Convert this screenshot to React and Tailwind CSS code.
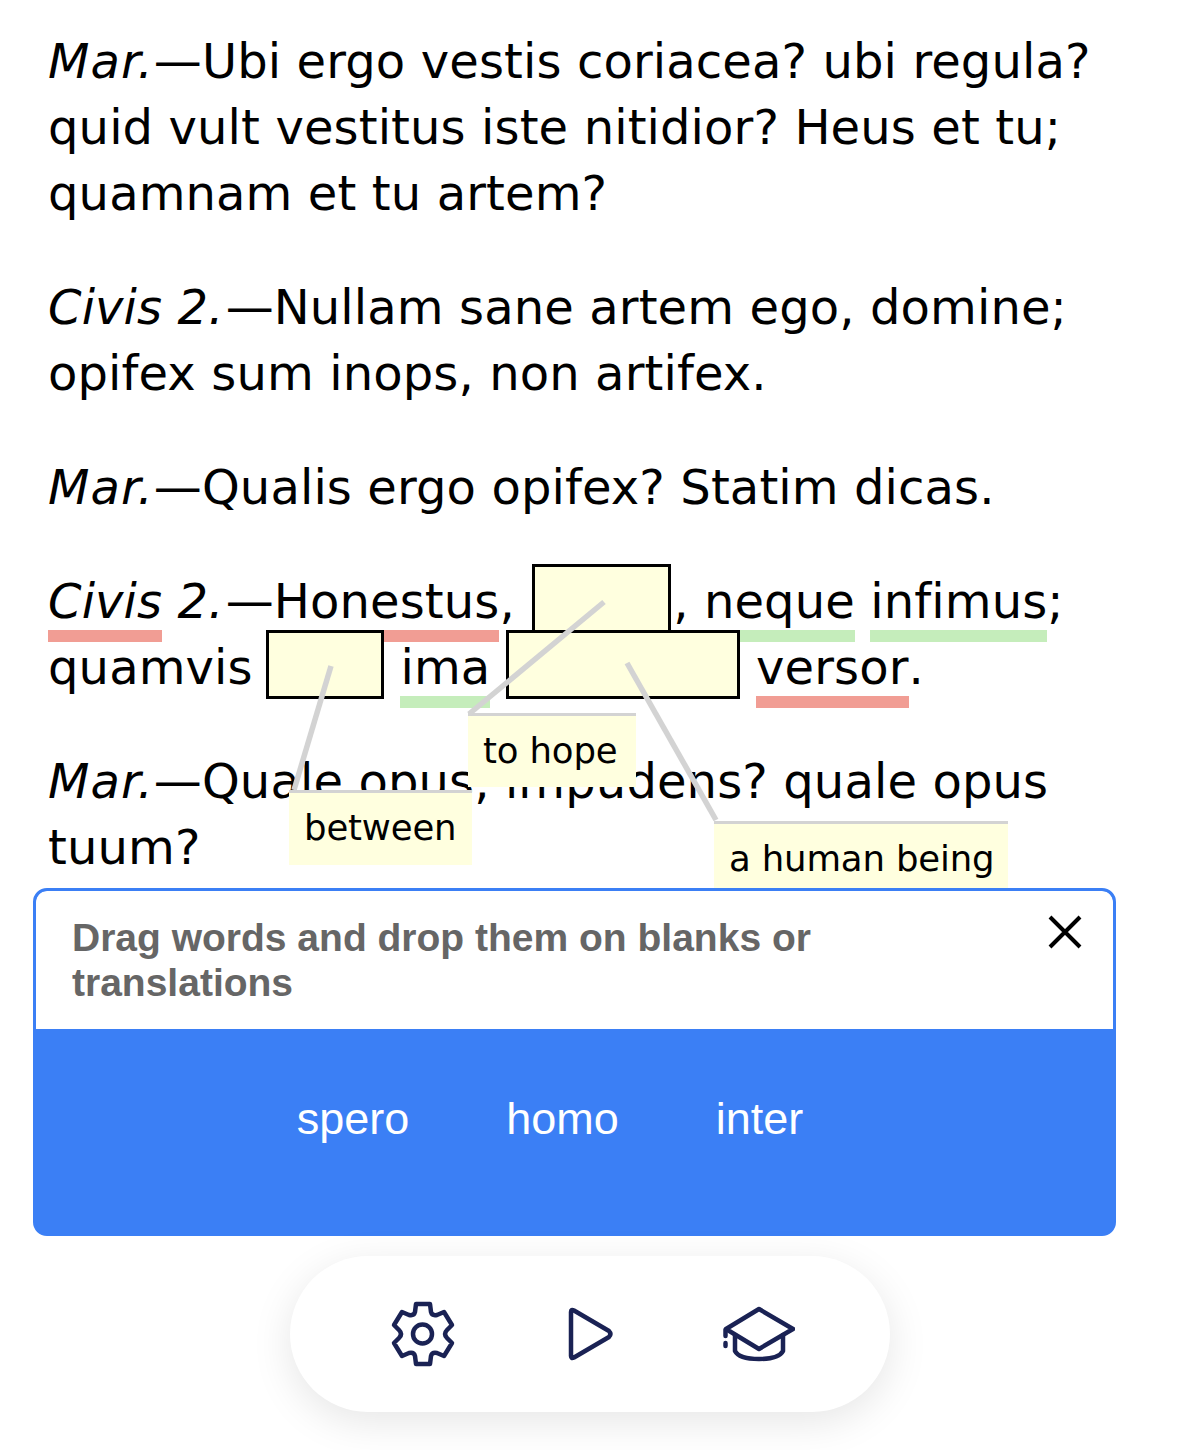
const Marked = ({ color, children }) => (
  <span className="relative inline-block">
    {children}
    <span className={`absolute left-0 right-0 top-[62px] h-[12px] ${color === 'red' ? 'bg-[#f19d94]' : 'bg-[#c5edbb]'}`} />
  </span>
);

const Blank = ({ width, className }) => (
  <span
    className={`relative inline-block align-top h-[69px] -mt-[4px] -mb-[1px] border-[3px] border-black bg-[#ffffdf] ${className}`}
    style={{ width }}
  />
);

const Hint = ({ className, children }) => (
  <div className={`absolute pl-[15px] pt-[12px] border-t-[3px] border-[#d3d3d3] bg-[#ffffdf] text-[35.5px] tracking-[-0.15px] leading-[46px] text-black ${className}`}>
    {children}
  </div>
);

const GearIcon = () => (
  <svg width="64" height="66" viewBox="0 0 64 66" fill="none" stroke="#1a2254" strokeWidth="4.5" strokeLinejoin="round" strokeLinecap="round">
    <path d="M25 3H39L40 11Q41 15 46 14L53 11L61 24L56 29Q52 33 56 37L61 42L53 55L46 52Q41 51 40 55L39 63H25L24 55Q23 51 18 52L11 55L3 42L8 37Q12 33 8 29L3 24L11 11L18 14Q23 15 24 11Z" />
    <ellipse cx="31.5" cy="33" rx="9.5" ry="9.5" />
  </svg>
);

const PlayIcon = () => (
  <svg width="46" height="54" viewBox="0 0 46 54" fill="none" stroke="#1a2254" strokeWidth="4.5" strokeLinejoin="round">
    <path d="M3 5Q3 2 6 3.5L41 24Q44 27 41 30L6 50.5Q3 52 3 49Z" />
  </svg>
);

const CapIcon = () => (
  <svg width="72" height="56" viewBox="0 0 72 56" fill="none" stroke="#1a2254" strokeWidth="4.5" strokeLinejoin="round" strokeLinecap="round">
    <path d="M36 3L70 23L36 43L3 23Z" />
    <path d="M12 29V45Q16 53 36 53Q56 53 60 45V29" />
    <path d="M2.5 24V30" />
    <path d="M2.5 37V40" />
  </svg>
);

const App = () => {
  return (
    <div className="relative h-[1450px] w-[1179px] overflow-hidden bg-white font-['DejaVu_Sans',sans-serif]">
      <div className="pl-[48px] pr-[70px] pt-[28px] text-[48px] tracking-[0.12px] leading-[66px] text-black">
        <p className="mb-[48px]">
          <em className="tracking-[1.1px]">Mar.</em>—Ubi ergo vestis coriacea? ubi regula? quid vult vestitus iste nitidior? Heus et tu; quamnam et tu artem?
        </p>
        <p className="mb-[48px]">
          <em className="mr-[2px]">Civis 2.</em>—Nullam sane artem ego, domine; opifex sum inops, non artifex.
        </p>
        <p className="mb-[48px]">
          <em className="tracking-[1.1px]">Mar.</em>—Qualis ergo opifex? Statim dicas.
        </p>
        <p className="mb-[48px]">
          <em className="mr-[2px]"><Marked color="red">Civis</Marked> 2.</em>—<Marked color="red">Honestus</Marked>, <Blank width="139px" className="ml-[2px] mr-[2px]" />, <Marked color="green">neque</Marked> <Marked color="green">infimus</Marked>; quamvis <Blank width="118px" className="-ml-[2px] mr-[1px]" /> <Marked color="green">ima</Marked> <Blank width="234px" className="mr-[1px]" /> <Marked color="red">versor</Marked>.
        </p>
        <p>
          <em className="tracking-[1.1px]">Mar.</em>—Quale opus, impudens? quale opus tuum?
        </p>
      </div>

      <Hint className="left-[468px] top-[713px] w-[168px] h-[74px]">to hope</Hint>
      <Hint className="left-[289px] top-[790px] w-[183px] h-[75px]">between</Hint>
      <Hint className="left-[714px] top-[821px] w-[294px] h-[70px]">a human being</Hint>

      <svg className="absolute left-0 top-0" width="1179" height="900" fill="none" stroke="#d3d3d3" strokeWidth="5.5">
        <path d="M604 602L469 714" />
        <path d="M331 666L294 790" />
        <path d="M627 663L716 820" />
      </svg>

      <div className="absolute left-[33px] top-[888px] w-[1083px] font-['Liberation_Sans',sans-serif]">
        <div className="overflow-hidden rounded-[14px] border-[3px] border-[#3b7ff5] bg-[#3b7ff5]">
          <div className="flex justify-between h-[138px] bg-white pl-[36px] pr-[31px] pt-[24px] rounded-t-[11px]">
            <p className="w-[800px] text-[39px] leading-[45px] font-bold text-[#666666]">
              Drag words and drop them on blanks or translations
            </p>
            <svg width="34" height="34" viewBox="0 0 34 34" stroke="black" strokeWidth="4">
              <path d="M2 2L32 32M32 2L2 32" />
            </svg>
          </div>
          <div className="flex h-[204px] justify-center gap-[97px] pt-[63px] pr-[49px] text-[45px] leading-[54px] text-white">
            <span>spero</span>
            <span>homo</span>
            <span>inter</span>
          </div>
        </div>
        <div className="flex h-[156px] w-[600px] ml-[257px] mt-[20px] items-center rounded-[78px] bg-white pl-[101px] shadow-[0_10px_40px_rgba(0,0,0,0.1)]">
          <GearIcon />
          <div className="ml-[113px]"><PlayIcon /></div>
          <div className="ml-[109px]"><CapIcon /></div>
        </div>
      </div>
    </div>
  );
};

export default App;
